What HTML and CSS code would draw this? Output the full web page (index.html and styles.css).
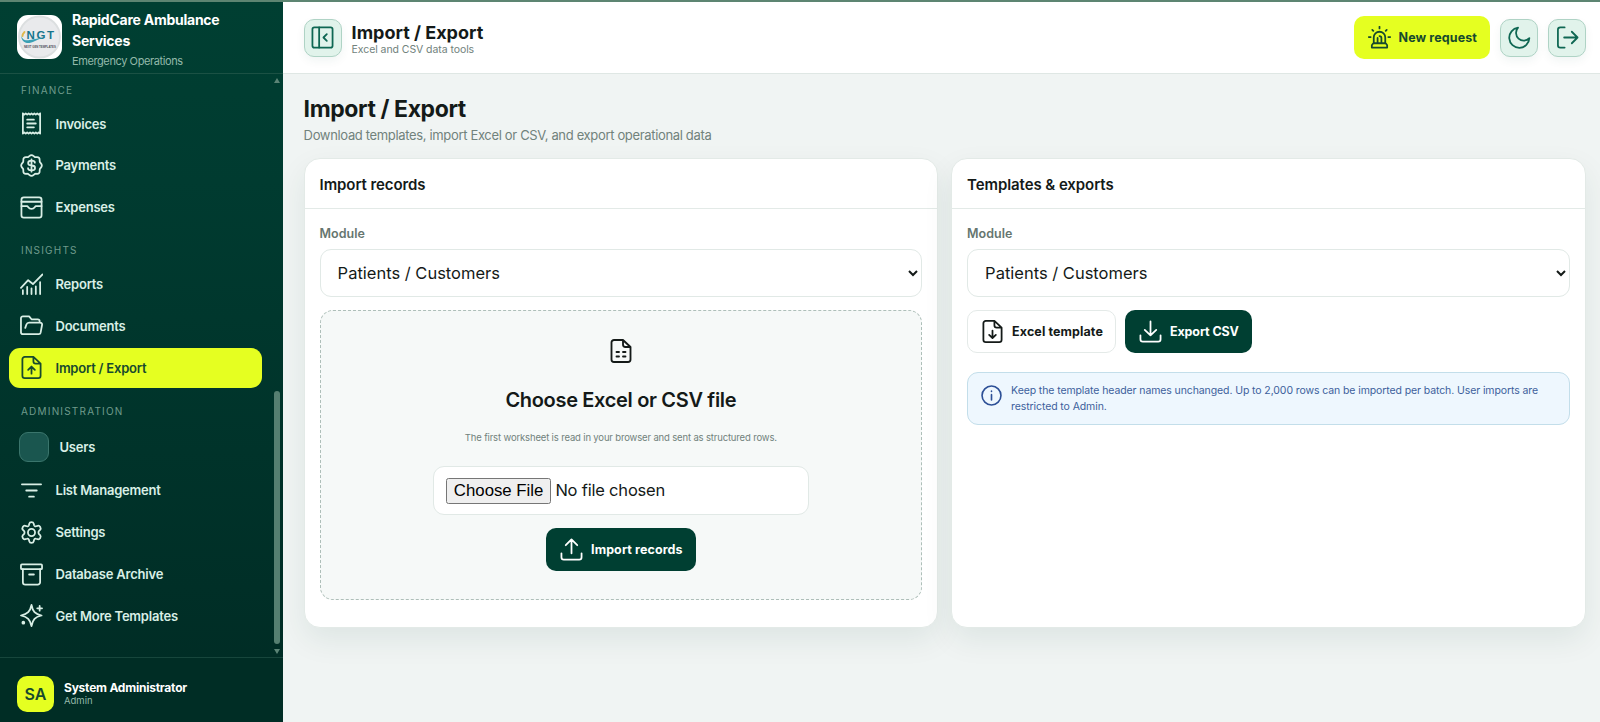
FILE: index.html
```
<!DOCTYPE html>
<html lang="en">
<head>
    <meta charset="UTF-8">
    <meta name="viewport" content="width=device-width, initial-scale=1.0">
    <title>Import / Export - RapidCare Ambulance Services</title>
    <link rel="stylesheet" href="styles.css">
</head>
<body>
    <div class="app">
        <aside class="sidebar">
            <div class="brand">
                <div class="brand-logo">
                    <svg viewBox="0 0 44 44">
                        <circle cx="22" cy="22" r="20.5" fill="#e9eaec" stroke="#dcdfe0"/>
                        <text class="logo-text" x="9" y="24">NGT</text>
                        <path d="M4 20c0 4 3 6 8 5 6-1 9-2 14-2-6 1-9 4-14 5-5 .6-9-3-8-8z" fill="#3aa0b4"/>
                        <path d="M5 21c0-2 1-3 2-4" fill="none" stroke="#e0b84c"/>
                        <text class="logo-sub" x="6.500" y="32.500">NEXT GEN TEMPLATES</text>
                    </svg>
                </div>
                <div>
                    <div class="brand-name">RapidCare Ambulance Services</div>
                    <div class="brand-sub">Emergency Operations</div>
                </div>
            </div>
            <nav class="nav">
                <div class="nav-label first">Finance</div>
                <a class="nav-item"><svg viewBox="0 0 24 24"><path d="M3 1.500v21M21 1.500v21M3 1.500l1.500 1.300L6 1.500l1.500 1.300L9 1.500l1.500 1.300L12 1.500l1.500 1.300L15 1.500l1.500 1.300L18 1.500l1.500 1.300L21 1.500M3 22.500l1.500-1.300L6 22.500l1.500-1.300L9 22.500l1.500-1.300 1.500 1.300 1.500-1.300 1.500 1.300 1.500-1.300 1.500 1.300 1.500-1.300 1.500 1.300M7.500 8h7M7.500 12h9M7.500 16h7"/></svg>Invoices</a>
                <a class="nav-item"><svg viewBox="0 0 24 24"><path d="M12 1.200c1.800 0 2.300 1.500 3.700 2s3-.5 4.200.8.200 2.800.8 4.200 2.100 2 2.100 3.800-1.500 2.400-2.100 3.800.5 2.900-.8 4.200-2.800.2-4.200.8-1.900 2-3.700 2-2.300-1.400-3.700-2-2.900.5-4.200-.8-.2-2.800-.8-4.200-2.100-2-2.100-3.800 1.500-2.400 2.100-3.800-.5-2.900.8-4.200 2.800-.3 4.200-.8 1.900-2 3.700-2z"/><path d="M15.500 9c0-1.200-1.400-2-3.500-2s-3.500.9-3.500 2.500S10 12 12 12s3.700.8 3.700 2.500S14.100 17 12 17s-3.600-.9-3.600-2.200M12 5.500v13"/></svg>Payments</a>
                <a class="nav-item"><svg viewBox="0 0 24 24"><rect x="1.500" y="1.500" width="21" height="21" rx="2.500"/><path d="M1.500 6h21M1.500 10.500h6c1 0 1.200 3 4.500 3s3.500-3 4.500-3h6"/></svg>Expenses</a>
                <div class="nav-label">Insights</div>
                <a class="nav-item"><svg viewBox="0 0 24 24"><path d="M1 15.500L8.500 7.500l5 4L23.500 1.500M3 22v-4M7.500 22v-7.500M12 22v-6M16.500 22v-8M21 22V9.500"/></svg>Reports</a>
                <a class="nav-item"><svg viewBox="0 0 24 24"><path d="M20.500 9V7.500a2 2 0 0 0-2-2H12L9.500 2.500H3a2 2 0 0 0-2 2V19a2 2 0 0 0 2 2h16.500a2 2 0 0 0 2-1.500L23 11.500A2 2 0 0 0 21 9H9.500a3 3 0 0 0-2.800 2L5.500 14.500"/></svg>Documents</a>
                <a class="nav-item active"><svg viewBox="0 0 24 24"><path d="M14 1H5a2.500 2.500 0 0 0-2.500 2.500v17A2.500 2.500 0 0 0 5 23h14a2.500 2.500 0 0 0 2.500-2.500V8zM14 1v4.500A2.500 2.500 0 0 0 16.500 8h5M12 18.500v-7M8.500 14.500L12 11l3.500 3.500"/></svg>Import / Export</a>
                <div class="nav-label admin">Administration</div>
                <a class="nav-item users"><span class="users-icon"></span>Users</a>
                <a class="nav-item"><svg viewBox="0 0 24 24"><path d="M2 5.500h20M6.500 12h11M9.500 18.500h5"/></svg>List Management</a>
                <a class="nav-item"><svg viewBox="0 0 24 24"><circle cx="12" cy="12" r="3.700"/><path d="M9.700 2.700C10.100.6 13.900.6 14.300 2.700L14.700 4.400C15 5.300 15.900 5.800 16.800 5.500L18.500 5C20.600 4.400 22.500 7.700 21 9.200L19.800 10.400C19.100 11 19.100 13 19.800 13.600L21 14.800C22.500 16.300 20.600 19.600 18.500 19L16.800 18.500C15.900 18.200 15 18.700 14.700 19.600L14.300 21.300C13.900 23.400 10.100 23.400 9.700 21.300L9.300 19.600C9 18.700 8.100 18.200 7.200 18.500L5.500 19C3.400 19.600 1.500 16.300 3 14.800L4.200 13.600C4.900 13 4.900 11 4.200 10.400L3 9.200C1.500 7.700 3.400 4.400 5.500 5L7.200 5.500C8.100 5.800 9 5.300 9.300 4.400z"/></svg>Settings</a>
                <a class="nav-item"><svg viewBox="0 0 24 24"><rect x="1" y="1.500" width="22" height="5" rx="1"/><path d="M3 6.500V20a2.500 2.500 0 0 0 2.500 2.500h13A2.500 2.500 0 0 0 21 20V6.500M9.500 12h5"/></svg>Database Archive</a>
                <a class="nav-item"><svg viewBox="0 0 24 24"><path d="M12 1c1.400 7 3.500 9.500 10.500 11-7 1.500-9.100 4-10.500 11C10.500 16 8 13.500 1 12 8 10.500 10.500 8 12 1zM20.500 2v5M18 4.500h5"/><circle cx="3.500" cy="19.500" r="1" fill="currentColor"/></svg>Get More Templates</a>
                <div class="scrollbar">
                    <span class="arrow-up"></span>
                    <span class="thumb"></span>
                    <span class="arrow-down"></span>
                </div>
            </nav>
            <div class="user">
                <div class="avatar">SA</div>
                <div>
                    <div class="user-name">System Administrator</div>
                    <div class="user-role">Admin</div>
                </div>
            </div>
        </aside>

        <main class="main">
            <header class="topbar">
                <button class="icon-btn"><svg viewBox="0 0 24 24"><rect x="1.500" y="1.500" width="21" height="21" rx="2"/><path d="M8.500 1.500v21M16.500 8.500L13 12l3.500 3.500"/></svg></button>
                <div class="topbar-title">
                    <div class="title">Import / Export</div>
                    <div class="subtitle">Excel and CSV data tools</div>
                </div>
                <button class="btn btn-lime"><svg viewBox="0 0 24 24"><path d="M6 18v-6a6 6 0 0 1 12 0v6M10 18v-5.500M14 18v-5.500a2 2 0 0 0-2-2M5.500 18h13l1.500 2v2.500H4V20zM12 .8v1.700M4.500 4l1 1M19.500 4l-1 1M.8 11.500h2M21.200 11.500h2"/></svg>New request</button>
                <button class="icon-btn"><svg viewBox="0 0 24 24"><path d="M10.500 1.800a7.700 7.700 0 0 0 11.800 10.800A10.500 10.500 0 1 1 10.500 1.800z"/></svg></button>
                <button class="icon-btn"><svg viewBox="0 0 24 24"><path d="M9 1.500H4.500A2.500 2.500 0 0 0 2 4v16a2.500 2.500 0 0 0 2.500 2.500H9M8.500 12h14M16.500 6l6 6-6 6"/></svg></button>
            </header>

            <div class="content">
                <h1>Import / Export</h1>
                <p class="lead">Download templates, import Excel or CSV, and export operational data</p>

                <div class="cards">
                    <section class="card">
                        <div class="card-header">Import records</div>
                        <div class="card-body">
                            <label class="label">Module</label>
                            <select class="select"><option>Patients / Customers</option></select>
                            <div class="dropzone">
                                <svg class="drop-icon" viewBox="0 0 24 24"><path d="M14 1H5a2.500 2.500 0 0 0-2.500 2.500v17A2.500 2.500 0 0 0 5 23h14a2.500 2.500 0 0 0 2.500-2.500V8zM14 1v4.500A2.500 2.500 0 0 0 16.500 8h5M7.500 13h2.500M14 13h2.500M7.500 17.500h2.500M14 17.500h2.500"/></svg>
                                <h2>Choose Excel or CSV file</h2>
                                <p class="hint">The first worksheet is read in your browser and sent as structured rows.</p>
                                <input class="file" type="file">
                                <button class="btn btn-dark"><svg viewBox="0 0 24 24"><path d="M1.500 16v4A2.500 2.500 0 0 0 4 22.500h16a2.500 2.500 0 0 0 2.500-2.500v-4M12 16V1.500M6 7.500l6-6 6 6"/></svg>Import records</button>
                            </div>
                        </div>
                    </section>

                    <section class="card">
                        <div class="card-header">Templates &amp; exports</div>
                        <div class="card-body">
                            <label class="label">Module</label>
                            <select class="select"><option>Patients / Customers</option></select>
                            <div class="actions">
                                <button class="btn btn-light"><svg viewBox="0 0 24 24"><path d="M14 1H5a2.500 2.500 0 0 0-2.500 2.500v17A2.500 2.500 0 0 0 5 23h14a2.500 2.500 0 0 0 2.500-2.500V8zM14 1v4.500A2.500 2.500 0 0 0 16.500 8h5M12 11v7.500M8.500 15.500L12 18.800l3.500-3.300"/></svg>Excel template</button>
                                <button class="btn btn-dark btn-export"><svg viewBox="0 0 24 24"><path d="M1.500 16v4A2.500 2.500 0 0 0 4 22.500h16a2.500 2.500 0 0 0 2.500-2.500v-4M12 1.500V16M6 10.300l6 5.700 6-5.700"/></svg>Export CSV</button>
                            </div>
                            <div class="alert">
                                <svg viewBox="0 0 24 24"><circle cx="12" cy="12" r="10.800"/><path d="M12 11v6M12 7v.5"/></svg>
                                <p>Keep the template header names unchanged. Up to 2,000 rows can be imported per batch. User imports are restricted to Admin.</p>
                            </div>
                        </div>
                    </section>
                </div>
            </div>
        </main>
    </div>
</body>
</html>
```
FILE: styles.css
```
* { box-sizing: border-box; }
body { margin: 0; font-family: Inter, sans-serif; color: #141a18; background: #f0f4f3; }
h1, h2, p { margin: 0; }
button { font-family: inherit; }
svg { width: 23px; height: 23px; flex: none; fill: none; stroke: currentColor; stroke-width: 1.85; stroke-linecap: round; stroke-linejoin: round; }

.app { display: flex; height: 722px; border-top: 2px solid #5d8572; overflow: hidden; }

/* sidebar */
.sidebar { width: 283px; flex: none; display: flex; flex-direction: column; color: #d9efe6; background: linear-gradient(180deg, #003f32 0%, #003b30 25%, #002b24 100%); }
.brand { height: 72px; flex: none; display: flex; align-items: center; gap: 10px; padding: 3px 40px 0 17px; border-bottom: 1px solid #1b5144; }
.brand-logo { width: 45px; height: 44px; flex: none; margin-top: -4px; border-radius: 11px; background: #fff; overflow: hidden; }
.brand-logo svg { width: 45px; height: 44px; stroke: none; }
.logo-text { font: bold 11.5px "Liberation Sans", sans-serif; letter-spacing: 1.6px; fill: #17758c; }
.logo-sub { font: bold 2.8px "Liberation Sans", sans-serif; fill: #50525c; }
.brand-name { font-size: 14px; font-weight: 700; line-height: 21.5px; letter-spacing: -0.25px; color: #fff; }
.brand-sub { font-size: 11px; line-height: 18px; letter-spacing: -0.4px; color: #93b9aa; }

.nav { position: relative; flex: 1; padding: 0 21px 0 9px; }
.nav-label { height: 35px; padding: 14px 0 0 12px; font-size: 10px; line-height: 14px; letter-spacing: 1.2px; text-transform: uppercase; color: #6f9b8c; }
.nav-label.first { height: 29.5px; padding-top: 9px; }
.nav-item { display: flex; align-items: center; gap: 12.5px; height: 40px; margin-bottom: 1.85px; padding: 0 11px; border-radius: 11px; font-size: 13px; font-weight: 600; letter-spacing: -0.22px; }
.nav-item.active { color: #174a2e; background: #e5ff21; }
.nav-item.users { height: 44px; padding-left: 10px; gap: 10.5px; }
.users-icon { width: 30px; height: 30px; border: 1px solid #3a756c; border-radius: 9px; background: #1a564f; }
.scrollbar { position: absolute; top: 4px; right: 3px; bottom: 3px; width: 6px; display: flex; flex-direction: column; align-items: center; }
.arrow-up { border: 3px solid transparent; border-top: 0; border-bottom: 5px solid #5b8476; }
.arrow-down { border: 3px solid transparent; border-bottom: 0; border-top: 5px solid #5b8476; }
.thumb { width: 6px; height: 253px; margin-top: auto; margin-bottom: 5px; border-radius: 3px; background: #557f71; }

.user { height: 65px; flex: none; display: flex; align-items: center; gap: 10px; padding: 7px 17px 0; border-top: 1px solid #17463c; background: #002d25; }
.avatar { width: 37px; height: 36px; border-radius: 10px; display: flex; align-items: center; justify-content: center; font-size: 16px; font-weight: 600; color: #174a2e; background: #e5ff21; }
.user-name { font-size: 12px; font-weight: 700; line-height: 14px; letter-spacing: -0.23px; color: #fff; }
.user-role { font-size: 9.5px; line-height: 12px; color: #93b9aa; }

/* topbar */
.main { flex: 1; min-width: 0; }
.topbar { height: 72px; display: flex; align-items: center; gap: 10px; padding: 0 14px 0 20.6px; background: #fff; border-bottom: 1px solid #dfe7e4; }
.topbar-title { flex: 1; padding-top: 3px; }
.title { font-size: 18px; font-weight: 700; line-height: 21px; letter-spacing: 0; }
.subtitle { font-size: 10.5px; line-height: 14px; letter-spacing: -0.07px; color: #71827c; }
.icon-btn { width: 38px; height: 38px; padding: 0; display: flex; align-items: center; justify-content: center; border: 1px solid #afd3c5; border-radius: 10px; color: #0f6753; background: #e1f3eb; box-shadow: 0 4px 10px rgba(0, 80, 60, 0.06); }

.btn { height: 43px; display: flex; align-items: center; gap: 8px; padding: 0 12px 0 13px; border: 1px solid transparent; border-radius: 10px; font-size: 12.5px; font-weight: 700; letter-spacing: 0.1px; white-space: nowrap; }
.btn-lime { color: #174a2e; background: #e5ff21; }
.btn-dark { color: #fff; background: #003f32; }
.btn-light { color: #141a18; background: #fff; border-color: #e4eae8; }
.btn-export { letter-spacing: -0.12px; }

/* content */
.content { padding: 21px 14.4px 0 20.6px; }
h1 { font-size: 23px; font-weight: 700; line-height: 28px; letter-spacing: -0.4px; }
.lead { margin: 3px 0 14px; font-size: 13px; line-height: 18px; letter-spacing: -0.34px; color: #71827c; }
.cards { display: grid; grid-template-columns: 1fr 1fr; gap: 13px; }
.card { height: 470px; border: 1px solid #e3eae7; border-radius: 16px; background: #fff; box-shadow: 0 12px 30px rgba(10, 60, 45, 0.08); }
.card-header { height: 50px; padding: 0 15px; border-bottom: 1px solid #e3eae7; font-size: 15px; font-weight: 600; line-height: 52px; letter-spacing: -0.08px; }
.card-body { padding: 16px 15px; }
.label { display: block; font-size: 12.5px; font-weight: 600; line-height: 17px; letter-spacing: 0; color: #66766f; }
.select { display: block; width: 100%; height: 48px; margin-top: 7px; padding: 0 1px 0 13px; border: 1px solid #e1e9e6; border-radius: 11px; background: #fff; font-family: inherit; font-size: 16.5px; color: #141a18; }

.dropzone { height: 290px; margin-top: 12.5px; padding-top: 28.5px; display: flex; flex-direction: column; align-items: center; border: 1px dashed #aebfb9; border-radius: 13px; background: #f6f9f8; }
.drop-icon { width: 24px; height: 24px; }
h2 { margin-top: 24px; font-size: 20px; font-weight: 600; line-height: 27px; letter-spacing: -0.33px; }
.hint { margin-top: 17px; font-size: 9.5px; line-height: 14px; letter-spacing: -0.155px; color: #71827c; }
.file { width: 376px; height: 49px; margin: 21px 0 13px; padding: 11px 12px; border: 1px solid #e1e9e6; border-radius: 11px; background: #fff; font-family: inherit; font-size: 16.5px; letter-spacing: -0.2px; }
.file::file-selector-button { font-family: "Liberation Sans", sans-serif; font-size: 16.8px; letter-spacing: 0; }

.actions { display: flex; gap: 9px; margin-top: 12.5px; }
.alert { display: flex; gap: 9.5px; height: 53px; margin-top: 19.5px; padding: 10px 12.5px; border: 1px solid #c3deea; border-radius: 11px; color: #3d5f9c; background: #eef7fe; }
.alert svg { width: 21px; height: 21px; margin-top: 2px; color: #2c4f96; }
.alert p { font-size: 10.5px; line-height: 15.5px; letter-spacing: -0.1px; }
```
